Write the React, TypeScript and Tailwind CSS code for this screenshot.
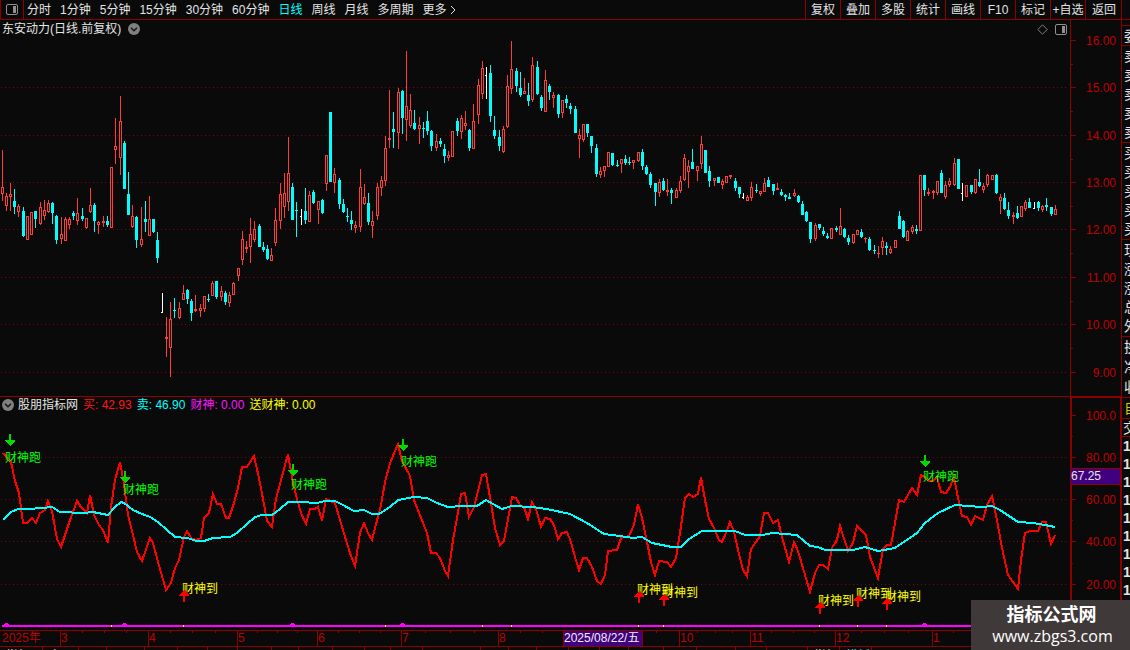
import React from "react";

type Kind = "R" | "C" | "W";
// x, high, body top, body bottom, low, kind (R rising, C falling, W unchanged)
type Candle = [number, number, number, number, number, Kind];

const candles: Candle[] = [
  [2,150,187,194,201,"R"],[6,193,196,206,211,"R"],[10,183,194,197,211,"R"],[14,189,201,207,214,"C"],[18,204,206,212,217,"R"],
  [23,207,211,236,237,"C"],[27,216,216,240,240,"R"],[31,212,212,235,235,"R"],[35,211,211,219,228,"C"],[40,202,207,224,225,"R"],
  [44,200,210,216,220,"R"],[48,200,203,212,213,"R"],[52,202,203,213,224,"C"],[56,215,216,240,244,"C"],[61,217,234,239,244,"R"],
  [65,217,219,241,241,"R"],[69,217,219,225,229,"R"],[73,211,213,216,220,"C"],[77,198,213,221,225,"R"],[82,208,216,219,221,"C"],
  [86,218,218,228,229,"R"],[90,188,205,212,213,"R"],[94,203,205,221,232,"C"],[98,221,222,225,234,"R"],[103,216,221,223,227,"R"],
  [107,216,221,225,227,"C"],[111,167,167,228,228,"R"],[115,118,146,150,164,"R"],[120,96,121,158,175,"R"],[124,141,143,189,189,"C"],
  [128,172,194,215,215,"C"],[132,205,216,227,228,"R"],[136,216,217,240,248,"C"],[141,207,239,245,247,"R"],[145,201,219,222,232,"C"],
  [149,196,219,236,236,"R"],[153,219,219,232,233,"C"],[157,232,240,258,263,"C"],[162,293,312,313,313,"W"],[166,317,337,339,357,"R"],
  [170,302,319,348,377,"R"],[174,298,310,311,318,"C"],[179,302,308,318,319,"R"],[183,285,293,300,300,"R"],[187,289,290,299,304,"C"],
  [191,299,301,313,321,"C"],[195,295,309,311,312,"R"],[200,304,308,311,317,"R"],[204,296,296,309,312,"R"],[208,294,299,300,302,"C"],
  [212,281,283,296,296,"R"],[216,281,281,297,299,"C"],[221,286,291,297,301,"R"],[225,291,293,302,305,"C"],[229,292,295,303,307,"R"],
  [233,282,283,295,295,"R"],[238,268,268,276,281,"R"],[242,231,239,260,265,"R"],[246,241,247,249,253,"R"],[250,218,234,247,263,"R"],
  [254,221,229,240,242,"R"],[259,224,226,247,247,"C"],[263,242,247,250,252,"C"],[267,245,249,259,260,"C"],[271,248,255,261,261,"R"],
  [275,208,220,243,246,"R"],[280,183,194,221,229,"R"],[284,173,193,207,218,"R"],[288,137,173,202,211,"R"],[292,183,187,220,220,"C"],
  [296,202,210,211,237,"C"],[301,209,216,217,225,"W"],[305,188,211,220,224,"C"],[309,191,195,222,222,"R"],[313,190,192,203,204,"C"],
  [318,201,201,210,224,"R"],[322,199,200,213,214,"C"],[326,155,155,184,191,"R"],[330,112,112,182,182,"C"],[334,168,174,183,193,"R"],
  [339,178,180,204,209,"C"],[343,199,204,212,213,"C"],[347,208,216,217,222,"C"],[351,211,220,224,230,"C"],[355,221,225,228,233,"R"],
  [360,169,187,227,232,"R"],[364,184,197,204,205,"R"],[368,193,203,222,225,"C"],[372,211,221,226,238,"R"],[377,183,187,216,220,"R"],
  [381,176,180,188,196,"R"],[385,136,148,181,186,"R"],[389,90,138,140,148,"R"],[393,112,129,132,148,"C"],[398,88,92,133,149,"R"],
  [402,90,91,118,134,"C"],[406,51,106,120,141,"R"],[410,94,110,126,128,"R"],[414,110,123,129,130,"C"],[419,117,125,129,144,"R"],
  [423,122,128,129,138,"C"],[427,111,121,131,135,"C"],[431,130,131,146,151,"C"],[436,134,141,148,151,"R"],[440,138,141,144,147,"C"],
  [444,144,149,156,163,"C"],[448,151,155,158,161,"R"],[452,131,131,157,157,"R"],[457,118,121,131,136,"C"],[461,115,118,132,139,"R"],
  [465,111,123,126,130,"R"],[469,129,130,148,151,"C"],[473,104,121,149,149,"R"],[478,79,85,115,124,"R"],[482,61,68,94,99,"R"],
  [486,67,75,76,99,"W"],[490,65,73,116,122,"C"],[494,116,130,136,139,"C"],[499,130,137,146,151,"C"],[503,126,129,152,153,"R"],
  [507,75,86,127,128,"R"],[511,41,69,89,94,"R"],[516,68,71,86,92,"C"],[520,72,88,95,97,"C"],[524,78,91,94,94,"R"],
  [528,83,95,101,106,"C"],[532,57,65,100,102,"R"],[537,61,67,94,95,"C"],[541,95,97,108,111,"C"],[545,70,80,112,112,"R"],
  [549,84,86,92,100,"C"],[553,92,95,98,108,"R"],[558,94,95,114,118,"C"],[562,100,100,113,118,"R"],[566,95,99,103,108,"C"],
  [570,103,106,109,114,"C"],[575,106,109,133,133,"C"],[579,129,135,139,158,"R"],[583,124,124,140,142,"R"],[587,124,124,133,137,"C"],
  [591,136,136,146,153,"C"],[596,144,148,174,177,"C"],[600,167,171,175,178,"R"],[604,166,166,171,177,"R"],[608,152,152,167,167,"R"],
  [612,153,153,165,166,"C"],[617,160,165,166,167,"C"],[621,159,159,164,173,"R"],[625,155,159,163,165,"C"],[629,157,162,163,165,"C"],
  [633,160,160,163,169,"R"],[638,152,152,161,162,"R"],[642,149,152,166,170,"C"],[646,165,167,174,175,"C"],[650,172,174,185,188,"C"],
  [655,183,183,192,206,"C"],[659,179,182,193,197,"R"],[663,178,181,190,191,"C"],[667,179,190,192,196,"R"],[671,188,190,193,204,"C"],
  [676,188,190,198,198,"R"],[680,176,181,191,193,"R"],[684,154,158,180,181,"R"],[688,160,166,172,188,"R"],[692,149,162,169,169,"C"],
  [697,166,166,171,181,"R"],[701,136,144,164,169,"R"],[705,150,150,173,173,"C"],[709,166,171,181,187,"C"],[714,178,178,181,186,"R"],
  [718,177,177,183,183,"C"],[722,179,181,185,189,"R"],[726,176,176,183,183,"R"],[730,175,175,177,179,"R"],[735,178,181,188,191,"C"],
  [739,187,187,194,198,"C"],[743,193,197,198,199,"W"],[747,195,197,201,201,"R"],[751,182,187,198,201,"R"],[756,184,190,191,193,"C"],
  [760,191,191,194,196,"R"],[764,178,183,192,192,"R"],[768,177,180,187,187,"C"],[773,184,184,191,195,"C"],[777,183,188,190,190,"R"],
  [781,189,192,195,196,"C"],[785,194,195,197,201,"C"],[789,193,197,199,199,"C"],[794,189,193,196,197,"R"],[798,195,196,202,203,"C"],
  [802,201,204,215,215,"C"],[806,211,212,221,222,"C"],[810,222,222,239,243,"C"],[815,223,225,239,241,"R"],[819,224,224,228,230,"C"],
  [823,227,231,234,236,"C"],[827,233,236,238,239,"C"],[831,228,228,239,239,"R"],[836,226,228,230,232,"C"],[840,208,226,235,235,"R"],
  [844,228,229,237,238,"C"],[848,235,238,242,245,"C"],[853,234,234,243,244,"R"],[857,230,230,235,235,"R"],[861,229,232,237,238,"C"],
  [865,237,238,239,243,"R"],[869,237,239,250,251,"C"],[874,245,250,251,254,"C"],[878,246,253,254,258,"R"],[882,237,241,248,255,"R"],
  [886,242,246,248,255,"C"],[890,246,249,253,254,"R"],[895,240,240,248,248,"R"],[899,211,216,229,229,"C"],[903,220,221,237,238,"C"],
  [907,230,231,241,241,"R"],[912,225,227,232,234,"R"],[916,225,229,231,234,"C"],[920,175,175,231,231,"R"],[924,175,175,190,196,"C"],
  [928,188,192,194,196,"R"],[933,190,191,193,199,"R"],[937,181,181,193,195,"R"],[941,170,173,193,193,"C"],[945,181,185,197,199,"R"],
  [949,178,181,185,187,"R"],[954,158,163,185,186,"R"],[958,159,159,189,189,"C"],[962,183,193,194,201,"W"],[966,185,185,197,197,"R"],
  [971,185,185,192,194,"C"],[975,179,179,193,194,"R"],[979,169,182,186,187,"C"],[983,183,186,190,193,"R"],[987,174,175,185,187,"R"],
  [992,175,175,180,180,"R"],[996,174,175,193,194,"C"],[1000,194,197,201,214,"R"],[1004,193,198,209,210,"C"],[1008,202,210,216,219,"C"],
  [1013,212,215,217,224,"R"],[1017,206,213,218,219,"C"],[1021,206,206,217,217,"R"],[1025,200,202,209,211,"R"],[1029,198,202,208,208,"C"],
  [1034,202,208,209,209,"W"],[1038,201,202,208,211,"C"],[1042,205,206,210,212,"R"],[1046,198,205,207,211,"C"],[1051,207,207,214,216,"C"],
  [1055,205,209,215,215,"R"],
];

const buyLine =
  "3,453 11,462 15,481 19,493 23,523 27,523 32,518 36,523 40,513 45,510 48,501 52,511 57,539 61,547 66,532 70,520 77,501 81,507 87,513 90,495 94,515 99,525 103,530 108,543 111,507 115,480 120,462 124,484 128,515 133,535 137,552 142,561 150,538 153,543 158,562 166,590 171,583 175,568 179,560 184,537 187,531 191,538 196,540 201,538 204,518 209,513 213,494 217,504 221,504 226,518 229,518 234,503 238,488 242,467 247,467 254,456 259,478 263,499 267,521 272,527 276,499 288,454 293,483 297,499 301,513 306,524 310,509 315,509 318,507 322,521 326,499 335,503 345,537 350,553 355,566 360,533 364,523 368,533 372,540 381,505 385,482 390,463 398,444 402,461 410,476 414,500 427,533 431,553 436,553 440,558 445,571 448,576 453,540 457,518 461,494 465,493 469,517 474,507 482,475 486,474 491,503 495,528 500,545 504,541 512,497 516,498 520,505 524,507 528,519 532,502 537,512 541,527 545,518 550,519 554,525 558,539 562,533 567,532 571,542 575,557 579,570 583,558 587,558 592,567 597,581 601,584 605,575 608,551 617,550 621,538 629,536 634,525 638,504 642,518 647,542 651,562 655,575 659,561 667,562 671,567 676,558 680,533 685,498 689,494 693,497 698,494 701,477 705,500 709,519 714,528 719,540 722,542 726,533 730,522 734,532 739,554 743,570 747,576 751,549 756,542 760,536 764,513 768,513 773,523 778,520 782,537 789,562 794,542 798,551 810,592 815,573 819,565 823,565 828,569 832,548 837,540 840,526 848,551 853,543 857,526 862,531 866,535 870,557 878,578 883,549 887,545 891,545 895,523 899,500 904,502 912,488 917,495 921,475 925,477 929,481 933,481 937,477 941,492 946,493 950,487 954,477 958,498 962,516 967,517 971,525 975,516 983,520 987,505 992,496 996,515 1000,537 1004,557 1008,575 1013,582 1018,589 1021,560 1025,533 1030,531 1038,531 1042,522 1046,522 1051,544 1055,535";

const sellLine =
  "3,520 11,512 18,509 27,509 43,508 52,507 60,512 83,513 93,512 108,515 115,507 121,502 124,503 133,510 142,514 150,517 158,522 167,530 175,537 187,538 197,541 204,541 213,538 230,537 237,533 247,524 255,517 262,515 272,515 280,509 288,502 300,502 317,503 325,501 335,501 343,505 354,511 364,510 372,514 379,514 390,507 398,500 414,497 427,498 437,503 448,507 462,506 477,506 486,500 493,504 502,509 512,506 532,507 547,509 570,514 587,523 604,534 620,536 633,538 642,537 652,543 672,547 681,547 689,539 702,531 735,531 745,535 762,535 773,533 797,535 810,546 818,547 825,550 853,550 865,547 878,551 895,548 917,533 925,523 938,513 955,505 982,507 992,506 1000,510 1018,522 1033,523 1045,525 1055,527";

// arrow x, arrow top, label x, label baseline
const runs = [[10,434,5,462],[125,471,123,494],[293,464,291,489],[403,439,401,466],[925,455,923,481]];
const arrivals = [[184,590,182,593],[639,591,637,594],[664,594,662,597],[820,602,818,605],[858,595,856,598],[887,598,885,601]];

const prices: [number, string][] = [[40,"16.00"],[87,"15.00"],[135,"14.00"],[182,"13.00"],[229,"12.00"],[277,"11.00"],[324,"10.00"],[372,"9.00"]];
const priceMinor = [64,111,159,206,253,301,348];
const levels: [number, string][] = [[415,"100.0"],[457,"80.00"],[499,"60.00"],[541,"40.00"],[584,"20.00"]];
const levelMinor = [436,520,563];

const periods = ["分时","1分钟","5分钟","15分钟","30分钟","60分钟","日线","周线","月线","多周期","更多"];
const tools = ["复权","叠加","多股","统计","画线","F10","标记","+自选","返回"];
const dateTicks = [82,104,126,170,192,215,257,277,297,338,359,380,425,450,474,520,542,656,697,715,732,771,793,814,861,884,908,953];
const months: [string, string][] = [
  ["2025年","w-[60px]"],["3","w-[88px]"],["4","w-[89px]"],["5","w-[80px]"],["6","w-[84px]"],["7","w-[97px]"],["8","w-[65px]"],
  ["2025/08/22/五","w-[79px]"],["","w-[37px]"],["10","w-[71px]"],["11","w-[85px]"],["12","w-[97px]"],["1","grow"],
];
const footer: [string, string][] = [
  ["指标A","w-[43px]"],["窗口","w-[36px]"],["","w-[28px]"],["","w-[38px]"],["","w-[33px]"],["","w-[30px]"],["","w-[30px]"],["","w-[34px]"],
  ["","w-[27px]"],["","w-[34px]"],["","w-[32px]"],["","w-[26px]"],["","w-[32px]"],["","w-[58px]"],["","w-[28px]"],["","w-[28px]"],
  ["","w-[32px]"],["","w-[31px]"],["","w-[29px]"],["","w-[35px]"],["","w-[33px]"],["","w-[39px]"],["","w-[31px]"],["","w-[41px]"],
  ["指标B","w-[32px]"],["模板","w-[32px]"],
];
const quoteGroups: { rows: string[]; cls: string }[] = [
  { rows: ["委"], cls: "h-[20px]" },
  { rows: ["卖","卖","卖","卖","卖"], cls: "h-[97px]" },
  { rows: ["买","买","买","买","买"], cls: "h-[97px]" },
  { rows: ["现","涨","涨","总","外"], cls: "h-[97px]" },
  { rows: ["换","净","收"], cls: "h-[61px]" },
];

function CandleShape({ c }: { c: Candle }) {
  const [x, hi, top, bot, lo, k] = c;
  if (k === "W")
    return (
      <g fill="#ffffff">
        <rect x={x} y={hi} width={1} height={lo - hi} />
        <rect x={x - 1} y={top} width={1} height={1} />
      </g>
    );
  const color = k === "R" ? "#ff3c3c" : "#00ffff";
  const hollow = k === "R" && bot - top > 2;
  return (
    <g fill={color}>
      <rect x={x} y={hi} width={1} height={lo - hi} />
      <rect x={x - 1} y={top} width={3} height={bot - top} />
      {hollow && <rect x={x} y={top + 1} width={1} height={bot - top - 2} fill="#0a0a0a" />}
    </g>
  );
}

function DotLine({ y }: { y: number }) {
  return <line x1={1} x2={1068} y1={y + 0.5} y2={y + 0.5} stroke="#780808" strokeDasharray="1 3" />;
}

function Axis({ ticks, minor }: { ticks: [number, string][]; minor: number[] }) {
  return (
    <>
      {ticks.map(([y, t]) => (
        <g key={t}>
          <rect x={1071} y={y} width={5} height={1} fill="#8c0000" shapeRendering="crispEdges" />
          <text x={1116} y={y + 5} textAnchor="end" fill="#c00000">{t}</text>
        </g>
      ))}
      {minor.map((y) => (
        <rect key={y} x={1071} y={y} width={2} height={1} fill="#8c0000" shapeRendering="crispEdges" />
      ))}
    </>
  );
}

function Badge() {
  return (
    <svg width="12" height="12" viewBox="0 0 12 12" className="shrink-0">
      <circle cx="6" cy="6" r="6" fill="#808080" />
      <path d="M3 4.8 6 7.8 9 4.8" fill="none" stroke="#141414" strokeWidth="1.4" />
    </svg>
  );
}

function PanelIcon() {
  return (
    <svg width="12" height="11" viewBox="0 0 12 11" className="shrink-0">
      <rect x="0.5" y="0.5" width="11" height="10" rx="1.5" fill="none" stroke="#909090" />
      <rect x="7" y="2" width="3" height="7" fill="#909090" />
    </svg>
  );
}

export default function App() {
  return (
    <div className="relative flex h-screen flex-col overflow-hidden bg-[#0a0a0a] font-['Liberation_Sans','Noto_Sans_CJK_SC',sans-serif] text-[12px] leading-[18px] text-[#e4e4e4]">
      <header className="flex h-5 shrink-0 border-b border-[#8c0000]">
        <button aria-label="侧栏" className="flex w-6 shrink-0 items-center justify-center border-x border-[#8c0000] pb-px pr-px">
          <PanelIcon />
        </button>
        <nav className="flex grow items-center gap-[9px] pl-[3px]">
          {periods.map((p) => (
            <button key={p} className={p === "日线" ? "whitespace-nowrap text-[#00ffff]" : "whitespace-nowrap"}>{p}</button>
          ))}
          <svg width="6" height="10" viewBox="0 0 6 10" className="-ml-[6px]">
            <path d="M1 1 5 5 1 9" fill="none" stroke="#e4e4e4" />
          </svg>
        </nav>
        <div className="flex pr-2">
          {tools.map((t) => (
            <button key={t} className="w-[35px] whitespace-nowrap border-l border-[#8c0000] text-center last:w-[37px]">{t}</button>
          ))}
        </div>
      </header>

      <div className="flex min-h-0 grow">
        <main className="flex min-w-0 grow flex-col">
          <section className="flex h-[376px] shrink-0">
            <div className="flex min-w-0 grow flex-col overflow-hidden">
              <div className="flex h-5 shrink-0 items-center gap-[7px] pb-[2px] pl-[2px] pr-[3px]">
                <h1>东安动力(日线.前复权)</h1>
                <Badge />
                <svg width="11" height="11" viewBox="0 0 11 11" className="ml-auto">
                  <path d="M5.5 0.8 10.2 5.5 5.5 10.2 0.8 5.5Z" fill="none" stroke="#808080" />
                </svg>
                <PanelIcon />
              </div>
              <svg width="1070" height="356" viewBox="0 40 1070 356" shapeRendering="crispEdges" className="shrink-0">
                {prices.slice(1).map(([y]) => <DotLine key={y} y={y} />)}
                {candles.map((c) => <CandleShape key={c[0]} c={c} />)}
              </svg>
            </div>
            <svg width="51" height="376" viewBox="1070 20 51 376" className="shrink-0">
              <rect x={1070} y={20} width={1} height={376} fill="#8c0000" />
              <Axis ticks={prices} minor={priceMinor} />
            </svg>
          </section>

          <section className="flex h-[234px] shrink-0">
            <div className="flex min-w-0 grow flex-col overflow-hidden border-t border-[#8c0000]">
              <div className="flex h-[17px] shrink-0 items-center whitespace-nowrap pb-px pl-[2px]">
                <Badge />
                <h2 className="pl-1">股朋指标网</h2>
                <span className="pl-[5px] text-[#ff1414]">买: 42.93</span>
                <span className="pl-[5px] text-[#00ffff]">卖: 46.90</span>
                <span className="pl-[5px] text-[#ff14ff]">财神: 0.00</span>
                <span className="pl-[5px] text-[#ffff00]">送财神: 0.00</span>
              </div>
              <svg width="1070" height="216" viewBox="0 414 1070 216" shapeRendering="crispEdges" className="shrink-0">
                {levels.slice(1).map(([y]) => <DotLine key={y} y={y} />)}
                <polyline points={buyLine} fill="none" stroke="#ff0000" strokeWidth={2} />
                <polyline points={sellLine} fill="none" stroke="#00ffff" strokeWidth={2} />
                <rect x={2} y={625} width={1053} height={2} fill="#ff00ff" />
                {[6, 124, 292, 402, 924].map((x) => (
                  <path key={x} d={`M${x - 2} 626v-2h1v-1h3v1h1v2z`} fill="#ff00ff" />
                ))}
                {[111, 183, 385, 482, 511, 638, 663, 819, 857, 886].map((x) => (
                  <rect key={x} x={x} y={625} width={1} height={2} fill="#ffff00" />
                ))}
                {runs.map(([x, y, tx, ty]) => (
                  <g key={x}>
                    <path d={`M${x - 1} ${y}h2v6h4v1l-4 4-1 1-1-1-4-4v-1h4z`} fill="#00dc00" />
                    <text x={tx} y={ty} fill="#00ff00">财神跑</text>
                  </g>
                ))}
                {arrivals.map(([x, y, tx, ty]) => (
                  <g key={x}>
                    <text x={tx} y={ty} fill="#ffff00">财神到</text>
                    <path d={`M${x - 1} ${y + 12}h2v-6h4v-1l-4-4-1-1-1 1-4 4v1h4z`} fill="#ff0000" />
                  </g>
                ))}
              </svg>
            </div>
            <svg width="51" height="234" viewBox="1070 396 51 234" className="shrink-0">
              <rect x={1071} y={397} width={50} height={240} fill="none" stroke="#8c0000" strokeWidth={2} />
              <Axis ticks={levels} minor={levelMinor} />
              <rect x={1071} y={468} width={49} height={17} fill="#8c0000" />
              <rect x={1071} y={469} width={49} height={15} fill="#400080" />
              <text x={1071} y={480} fill="#e4e4e4">67.25</text>
            </svg>
          </section>

          <div className="relative flex h-[17px] shrink-0 overflow-hidden border-y border-[#8c0000] leading-[15px] text-[#c00000]">
            {months.map(([m, w], i) => (
              <span
                key={i}
                className={`${w} shrink-0 whitespace-nowrap ${i === 0 ? "pl-[2px]" : "border-l border-[#8c0000]"} ${i === 7 ? "bg-[#400080] text-[#f0f0f0]" : ""}`}
              >
                {m}
              </span>
            ))}
            <svg width="1070" height="2" className="absolute left-0 top-0" shapeRendering="crispEdges">
              {dateTicks.map((x) => <rect key={x} x={x} y={0} width={1} height={2} fill="#8c0000" />)}
            </svg>
          </div>
          <div className="flex min-h-0 grow overflow-hidden leading-[18px]">
            {footer.map(([t, w], i) => (
              <span key={i} className={`${w} shrink-0 whitespace-nowrap border-r border-[#8c0000] pl-[6px] ${t === "模板" ? "text-[#00ffff]" : ""}`}>{t}</span>
            ))}
          </div>
        </main>

        <aside className="-mt-5 flex w-[9px] shrink-0 flex-col overflow-hidden border-l border-[#8c0000] pt-[25px] text-[14px]">
          {quoteGroups.map((g, i) => (
            <div key={i} className={`${g.cls} flex shrink-0 flex-col justify-around border-t border-[#8c0000] pl-[2px]`}>
              {g.rows.map((r, j) => <span key={j}>{r}</span>)}
            </div>
          ))}
          <div className="h-[21px] shrink-0 border-t border-[#8c0000] pl-[2px] leading-[20px] text-[#d8c800]">自</div>
          <div className="h-[19px] shrink-0 border-y border-[#8c0000] pl-px">交</div>
          {Array.from({ length: 11 }, (_, i) => (
            <span key={i} className="h-[18px] shrink-0 pl-px font-bold">1</span>
          ))}
        </aside>
      </div>

      <div className="absolute bottom-0 right-0 flex h-[50px] w-[159px] flex-col items-center bg-[#403939] pl-1 text-white">
        <strong className="mt-[3px] pr-[2px] text-[18px] leading-6">指标公式网</strong>
        <span className="font-['Open_Sans',sans-serif] text-[16px] leading-[18px]">www.zbgs3.com</span>
      </div>
    </div>
  );
}
